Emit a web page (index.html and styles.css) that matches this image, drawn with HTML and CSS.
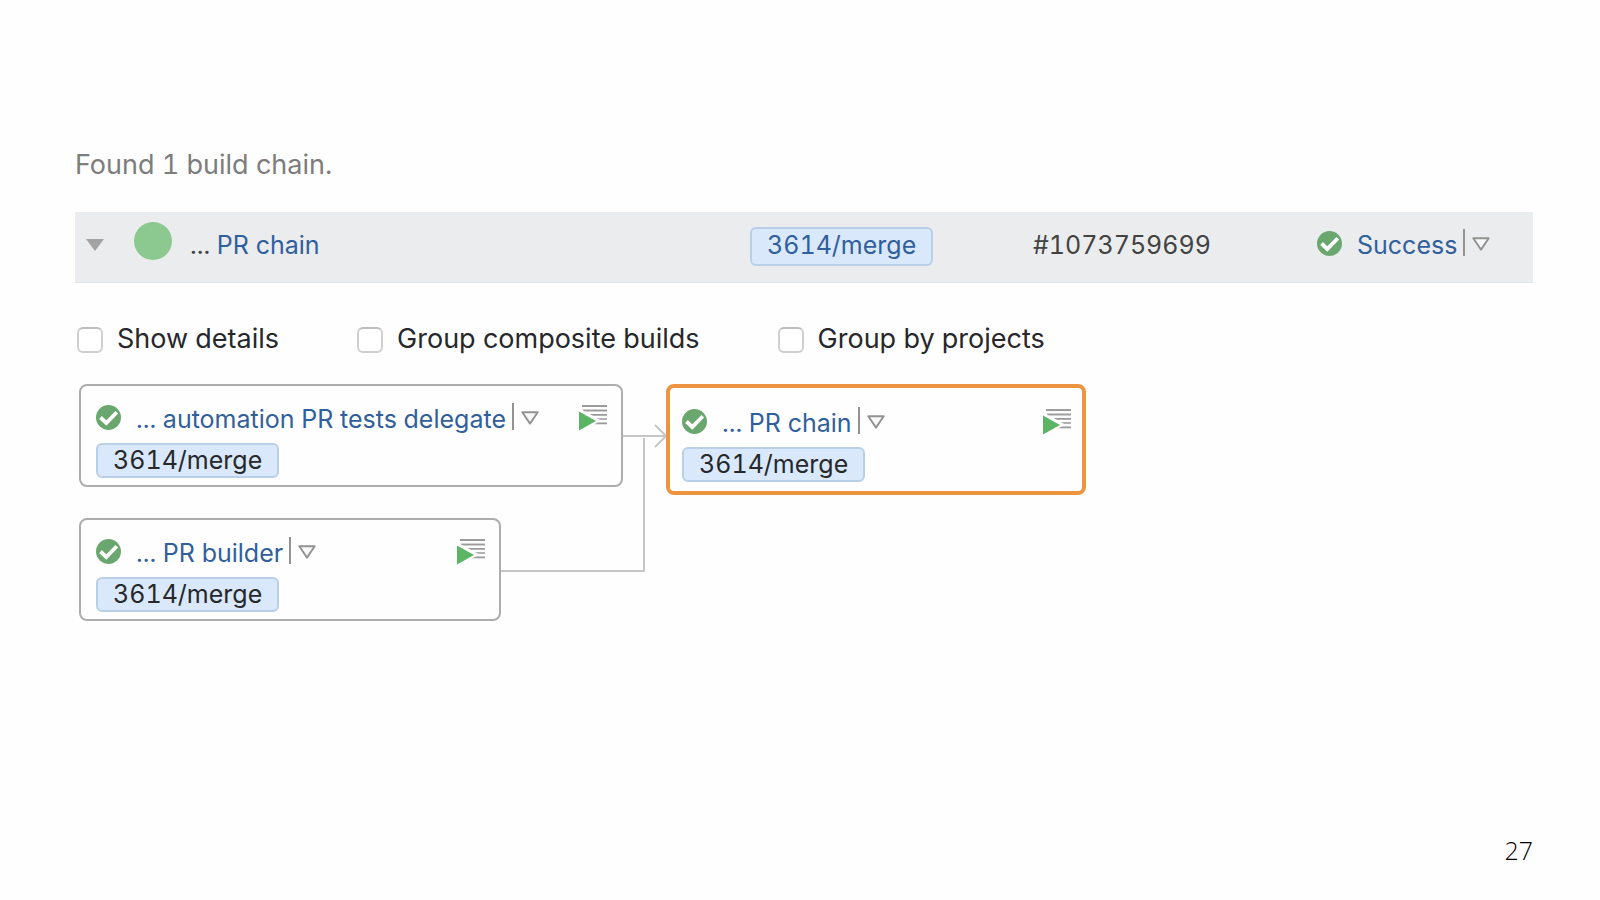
FILE: index.html
```
<!DOCTYPE html>
<html lang="en">
<head>
<meta charset="utf-8">
<title>Build chains</title>
<link rel="stylesheet" href="styles.css">
</head>
<body>
<svg class="defs" aria-hidden="true">
  <symbol id="check" viewBox="0 0 25 25"><circle cx="12.500" cy="12.500" r="12.500" fill="#6aa76e"/><path d="M4.500 12.500 10.300 18 20.800 7.200" fill="none" stroke="#fff" stroke-width="3.800"/></symbol>
  <symbol id="caret" viewBox="0 0 18 14"><path d="M1.300 1.300h15.400L9 12.600z" fill="#f8f8f8" stroke="#929292" stroke-width="1.900" stroke-linejoin="round"/></symbol>
  <symbol id="run" viewBox="0 0 28 26"><path d="M3 1.200h25M3 5.500h25M3 9.800h25M3 14h25M3 18.300h25" stroke="#999" stroke-width="1.700"/><path d="M-2 1.500v28L22 15.500z" fill="#fff"/><path d="M3 1.200h25M4.500 5.500h23.500" stroke="#999" stroke-width="1.700"/><path d="M0 6.500v19L17 16z" fill="#5cb564"/></symbol>
</svg>
<main class="page">
  <p class="found">Found 1 build chain.</p>

  <section class="chain">
    <button class="toggle" aria-label="Collapse"><svg viewBox="0 0 18 12"><path d="M0 0h18L9 12z" fill="#a3a3a3"/></svg></button>
    <span class="dot"></span>
    <span class="chain-name">... <a href="#">PR chain</a></span>
    <a class="tag tag-link" href="#">3614/merge</a>
    <span class="number">#1073759699</span>
    <span class="status">
      <svg class="check"><use href="#check"/></svg>
      <a href="#">Success</a>
      <button class="menu" aria-label="Build menu"><svg><use href="#caret"/></svg></button>
    </span>
  </section>

  <form class="options">
    <label><input type="checkbox">Show details</label>
    <label><input type="checkbox">Group composite builds</label>
    <label><input type="checkbox">Group by projects</label>
  </form>

  <section class="graph">
    <svg class="links" viewBox="0 0 590 240" aria-hidden="true"><path d="M544 52h42M422 187h143V54M576 41l11 11-11 11" fill="none" stroke="#c6c6c6" stroke-width="2"/></svg>
    <div class="column">
      <article class="card">
        <div class="title">
          <svg class="check"><use href="#check"/></svg>
          <a href="#">... automation PR tests delegate</a>
          <button class="menu" aria-label="Build menu"><svg><use href="#caret"/></svg></button>
          <button class="run" aria-label="Run"><svg><use href="#run"/></svg></button>
        </div>
        <span class="tag">3614/merge</span>
      </article>
      <article class="card narrow">
        <div class="title">
          <svg class="check"><use href="#check"/></svg>
          <a href="#">... PR builder</a>
          <button class="menu" aria-label="Build menu"><svg><use href="#caret"/></svg></button>
          <button class="run" aria-label="Run"><svg><use href="#run"/></svg></button>
        </div>
        <span class="tag">3614/merge</span>
      </article>
    </div>
    <article class="card current">
      <div class="title">
        <svg class="check"><use href="#check"/></svg>
        <a href="#">... PR chain</a>
        <button class="menu" aria-label="Build menu"><svg><use href="#caret"/></svg></button>
        <button class="run" aria-label="Run"><svg><use href="#run"/></svg></button>
      </div>
      <span class="tag">3614/merge</span>
    </article>
  </section>

  <footer class="page-number">27</footer>
</main>
</body>
</html>
```

FILE: styles.css
```
* { box-sizing: border-box; }

body {
  margin: 0;
  background: #fefefe;
  color: #26282b;
  font-family: Inter, "Liberation Sans", sans-serif;
  font-size: 25px;
  font-variant-numeric: tabular-nums;
  line-height: 32px;
}

a { color: #315f9c; text-decoration: none; }
svg { display: block; }
button { padding: 0; border: 0; background: none; }

.defs { position: absolute; width: 0; height: 0; }

.page {
  display: flex;
  flex-direction: column;
  min-height: 100vh;
  padding: 149px 67px 34px 75px;
}

.found { margin: 0 0 31px; color: #7d7d7d; font-size: 27px; }

.chain {
  display: grid;
  grid-template-columns: 18px 39px minmax(0, 607fr) minmax(0, 283fr) minmax(0, 284fr) 216px;
  align-items: start;
  height: 71px;
  padding: 10px 0 0 11px;
  border-bottom: 1px solid #dfe5ec;
  background: #ebecee;
  color: #424242;
}

.toggle { width: 18px; margin-top: 17px; }
.dot { width: 38px; height: 38px; margin-left: 30px; border-radius: 50%; background: #8cc990; }
.chain-name { margin: 7px 0 0 47px; }
.number { margin-top: 7px; }
.status { display: flex; align-items: flex-start; }
.status a { margin: 7px 6px 0 15px; }
.status .check { margin-top: 9px; }
.status .menu { margin-top: 7px; }

.check { flex: none; width: 25px; height: 25px; }

.tag {
  justify-self: start;
  display: inline-block;
  padding: 0 15px;
  border: 2px solid #b9cfe8;
  border-radius: 6px;
  background: #d9e9fb;
  color: #26282b;
  line-height: 31px;
}
.tag-link { margin-top: 5px; padding-bottom: 2px; color: #315f9c; line-height: 33px; }

.menu {
  display: flex;
  height: 27px;
  padding: 8px 0 0 7px;
  border-left: 2px solid #929292;
}
.menu svg { width: 18px; height: 14px; }

.options {
  display: flex;
  margin: 40px 0 29px 2px;
  gap: 78px;
  font-size: 27px;
}
.options label { display: flex; align-items: center; gap: 14px; }
.options input {
  appearance: none;
  width: 26px;
  height: 26px;
  margin: 2px 0 0;
  border: 2px solid #cfcfcf;
  border-top-color: #bdbdbd;
  border-radius: 6px;
  background: #fff;
}

.graph {
  position: relative;
  display: flex;
  align-items: flex-start;
  gap: 43px;
  margin-left: 4px;
}
.links { position: absolute; top: 0; left: 0; width: 590px; height: 240px; }
.column { display: flex; flex-direction: column; gap: 31px; width: 544px; }

.card {
  position: relative;
  padding: 17px 14px 7px 15px;
  border: 2px solid #adadad;
  border-radius: 8px;
  background: #fefefe;
}
.narrow { width: 422px; }
.current { width: 420px; padding: 19px 11px 9px 12px; border: 4px solid #ec9440; }

.title { display: flex; align-items: flex-start; height: 40px; }
.title a { margin: 0 6px 0 15px; }
.title .check { margin-top: 2px; }
.card .tag { display: block; width: fit-content; }
.run { margin-left: auto; padding-top: 2px; }
.run svg { width: 28px; height: 26px; }

.page-number {
  align-self: flex-end;
  margin-top: auto;
  color: #000;
  font-family: "Open Sans", "Noto Sans", sans-serif;
  font-size: 25px;
  font-weight: 300;
}
```
